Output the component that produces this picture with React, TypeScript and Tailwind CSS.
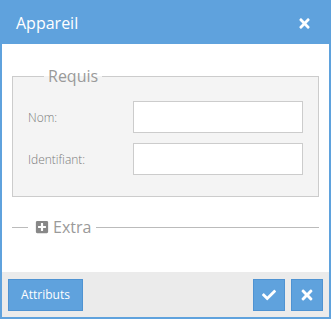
import React from "react";
import { FaTimes, FaCheck, FaPlusSquare } from "react-icons/fa";

export default function App() {
  return (
    <div
      className="w-[331px] h-[319px] border-2 border-[#5fa2dd] bg-white flex flex-col"
      style={{ fontFamily: '"Open Sans", "Liberation Sans", sans-serif' }}
    >
      <div className="h-[42px] shrink-0 bg-[#5fa2dd] flex items-center justify-between pl-[14px] pr-[17px]">
        <span className="text-[16px] text-white leading-none">Appareil</span>
        <FaTimes className="text-white" size={15} />
      </div>
      <div className="flex-1 flex flex-col px-[10px] pt-[22px]">
        <fieldset className="border border-[#cccccc] bg-[#f4f4f4] pt-[15px] pb-[21px] pl-[15px] pr-[15px] flex flex-col gap-[10px]">
          <legend className="ml-[16px] px-[4px] text-[16px] leading-[20px] text-[#9a9a9a]">Requis</legend>
          <div className="flex items-center">
            <label className="w-[105px] pt-[2px] text-[12px] text-[#7a7a7a] font-light">Nom:</label>
            <input className="w-[170px] h-[32px] bg-white border border-[#cccccc] outline-none" />
          </div>
          <div className="flex items-center">
            <label className="w-[105px] pt-[2px] text-[12px] text-[#7a7a7a] font-light">Identifiant:</label>
            <input className="w-[170px] h-[32px] bg-white border border-[#cccccc] outline-none" />
          </div>
        </fieldset>
        <div className="mt-[19px] h-[22px] flex items-center">
          <div className="w-[16px] h-px bg-[#bbbbbb]" />
          <FaPlusSquare className="ml-[7px] text-[#888888]" size={14} />
          <span className="ml-[4px] text-[16px] leading-none text-[#9a9a9a]">Extra</span>
          <div className="ml-[5px] flex-1 h-px bg-[#bbbbbb]" />
        </div>
      </div>
      <div className="h-[45px] shrink-0 bg-[#ebebeb] flex items-start justify-between pt-[7px] px-[6px]">
        <button className="w-[75px] h-[32px] bg-[#5fa2dd] border border-[#4f93d2] text-white text-[12px] flex items-center justify-center">
          Attributs
        </button>
        <div className="flex gap-[6px]">
          <button className="w-[32px] h-[32px] bg-[#5fa2dd] border border-[#4f93d2] text-white flex items-center justify-center">
            <FaCheck size={14} />
          </button>
          <button className="w-[32px] h-[32px] bg-[#5fa2dd] border border-[#4f93d2] text-white flex items-center justify-center">
            <FaTimes size={16} />
          </button>
        </div>
      </div>
    </div>
  );
}
